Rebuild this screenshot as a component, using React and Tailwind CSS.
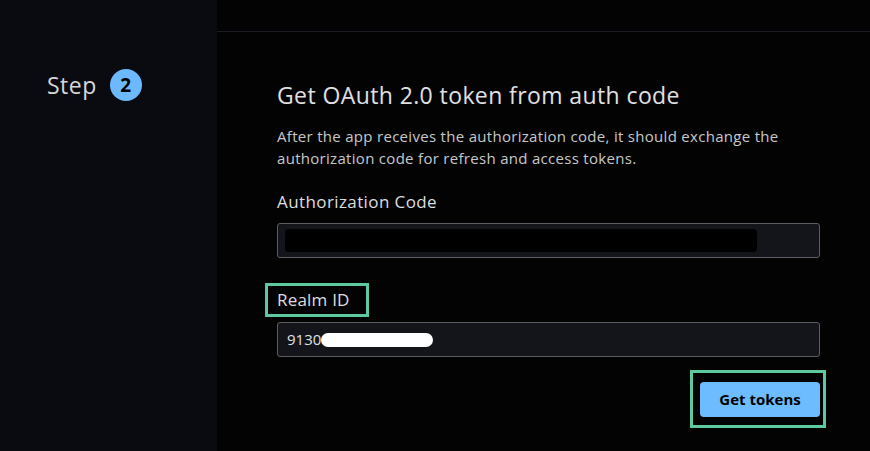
export default function App() {
    return (
        <div
            className="flex h-[451px] w-[870px] overflow-hidden bg-[#030304] text-[#dcdcdc]"
            style={{ fontFamily: '"Open Sans", "Noto Sans", sans-serif' }}
        >
            <aside className="w-[217px] shrink-0 bg-[#0a0b10] pl-[47px] pt-[68px]">
                <div className="flex items-center gap-[13px]">
                    <span className="text-[23px] tracking-[0.5px] text-[#d6d6d6]">Step</span>
                    <span className="flex h-[32px] w-[32px] items-center justify-center rounded-full bg-[#6cb9ff] text-[19px] font-bold text-black">
                        2
                    </span>
                </div>
            </aside>
            <main className="flex min-w-0 flex-1 flex-col">
                <div className="h-[32px] shrink-0 border-b border-[#1c1d24]" />
                <div className="flex flex-col pl-[60px] pr-[50px] pt-[49px]">
                    <h1 className="text-[23px] leading-[28px] tracking-[0.4px] text-[#e0e0e0]">
                        Get OAuth 2.0 token from auth code
                    </h1>
                    <p className="mt-[16px] text-[15px] leading-[22px] tracking-[0.3px] text-[#c8c8c8]">
                        After the app receives the authorization code, it should exchange the
                        authorization code for refresh and access tokens.
                    </p>
                    <label className="mt-[21px] text-[17px] leading-[24px] tracking-[0.4px] text-[#dedede]">
                        Authorization Code
                    </label>
                    <div className="mt-[9px] flex h-[35px] items-center rounded-[3px] border border-[#5c5d63] bg-[#14151a] px-[7px]">
                        <div className="h-[23px] w-[472px] rounded-[4px] bg-black" />
                    </div>
                    <div className="mt-[25px] -ml-[12px] self-start border-[3px] border-[#5cc9a0] py-[2px] pl-[9px] pr-[16px] text-[17px] leading-[24px] tracking-[0.2px] text-[#dedede]">
                        Realm ID
                    </div>
                    <div className="mt-[5px] flex h-[35px] items-center rounded-[3px] border border-[#5c5d63] bg-[#14151a] px-[9px] text-[15px] text-[#e0e0e0]">
                        <span>9130</span>
                        <span className="h-[14px] w-[112px] rounded-full bg-white" />
                    </div>
                    <div className="mt-[13px] self-end -mr-[6px] border-[3px] border-[#5cc9a0] pb-[8px] pl-[7px] pr-[3px] pt-[9px]">
                        <button className="flex h-[35px] w-[120px] items-center justify-center rounded-[4px] bg-[#6cbcff] text-[15px] font-bold text-black">
                            Get tokens
                        </button>
                    </div>
                </div>
            </main>
        </div>
    );
}
